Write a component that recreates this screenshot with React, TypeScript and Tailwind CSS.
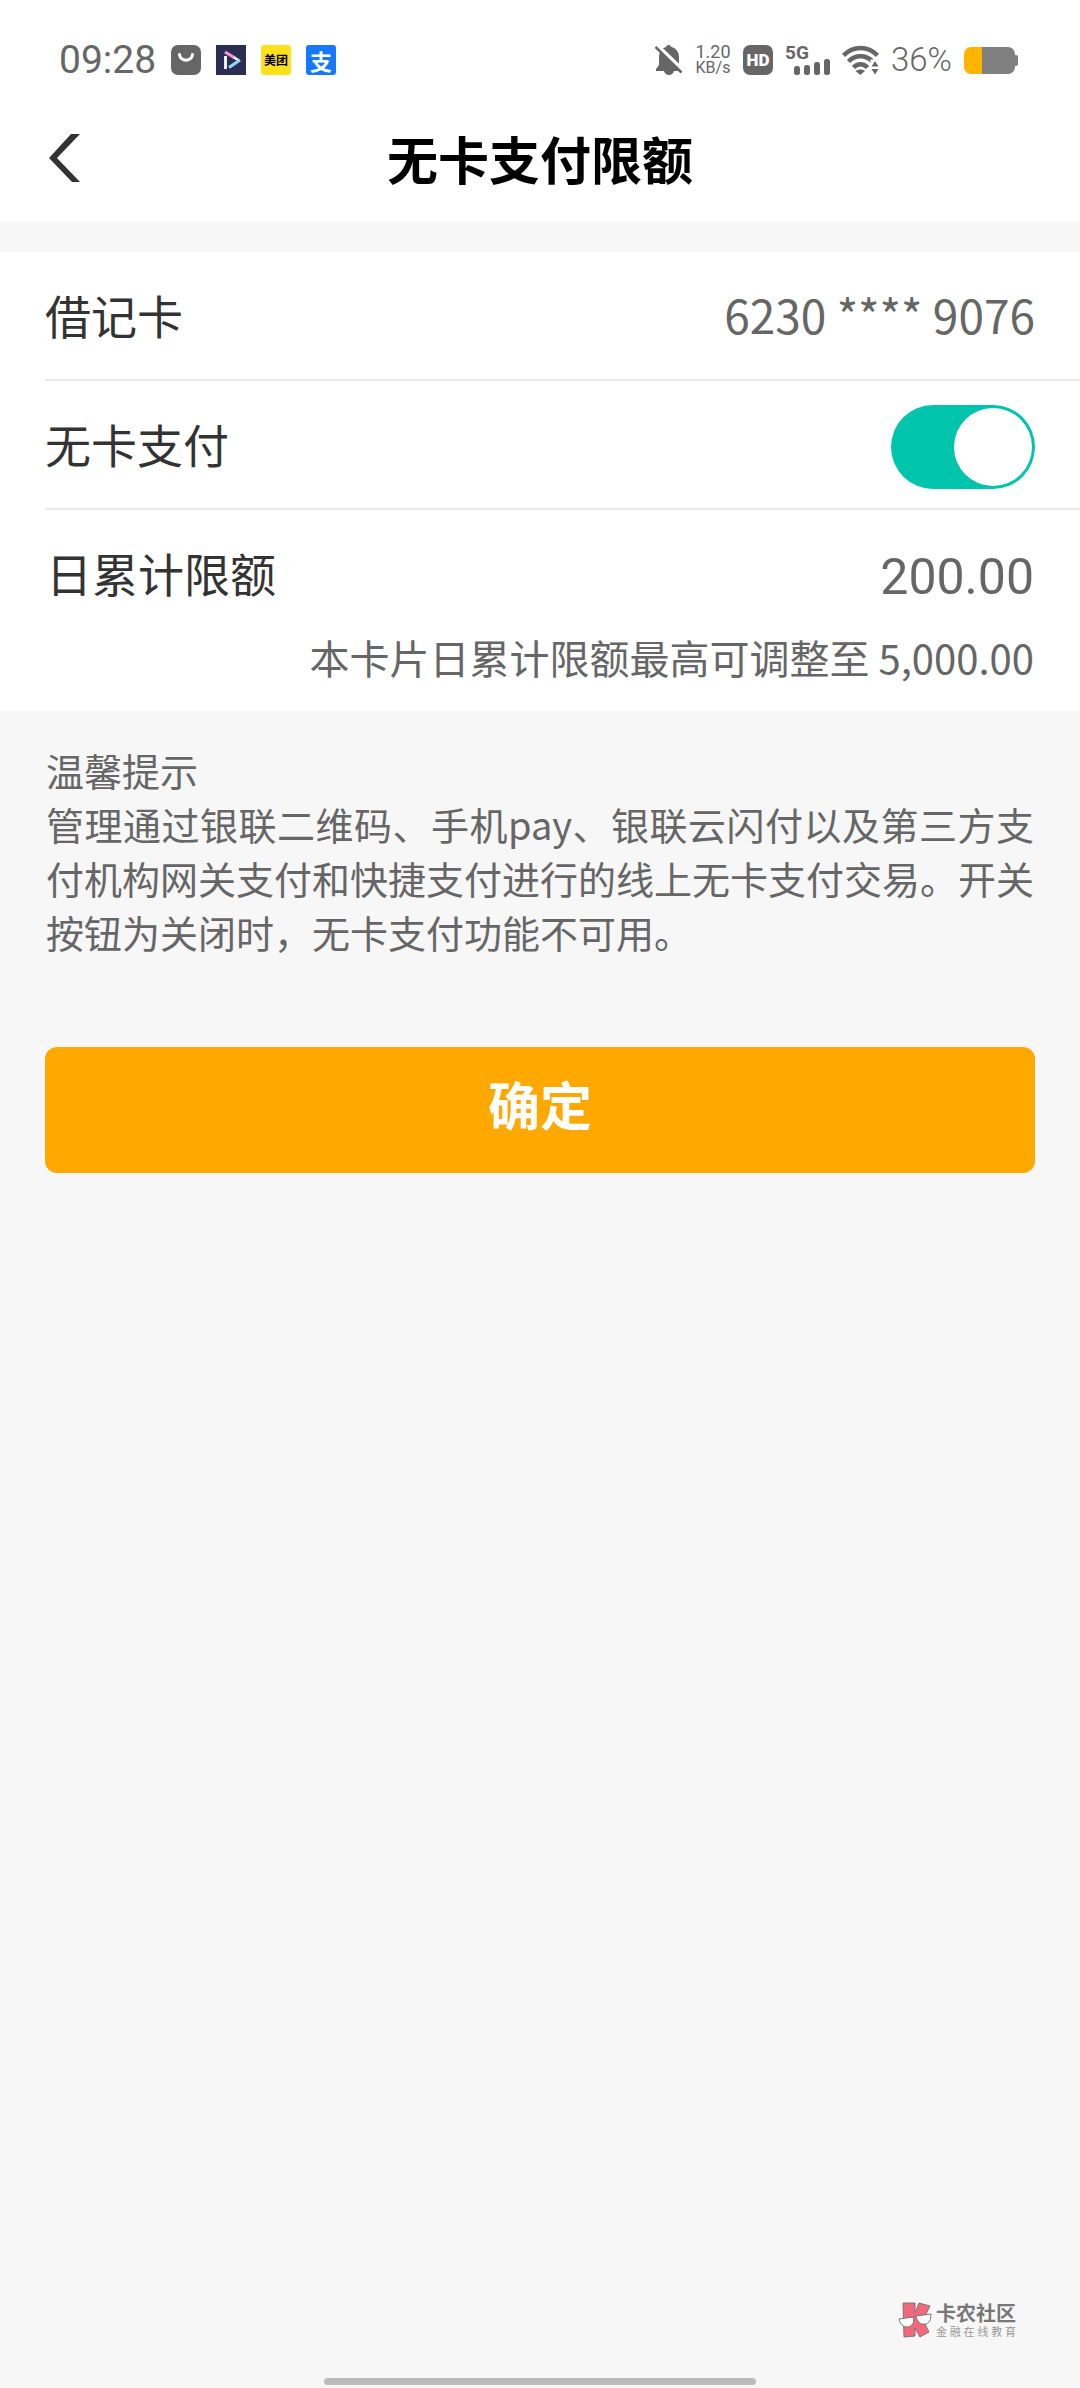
import { useState } from "react";
import type { ReactNode } from "react";

function StatusBar() {
  return (
    <div className="flex h-[102px] items-end justify-between pb-6 pl-[59px] pr-[61px] font-[Roboto,sans-serif] text-[#666]">
      <div className="flex items-center gap-[15px]">
        <span className="text-[39px] leading-9">09:28</span>
        <svg className="size-[30px]" viewBox="0 0 30 30">
          <rect width="30" height="30" rx="7" fill="#666" />
          <path
            d="M8.5 9.5c1 7.5 12 7.5 13 0"
            fill="none"
            stroke="#fff"
            strokeWidth="3"
            strokeLinecap="round"
          />
        </svg>
        <svg className="size-[30px]" viewBox="0 0 30 30">
          <rect width="30" height="30" fill="#2c2d52" />
          <path d="M9.500 11v13" stroke="#fff" strokeWidth="2.8" />
          <path d="M9 7l10 6" stroke="#f59ad0" strokeWidth="3.200" />
          <path d="M18 12.500l5 3" stroke="#fff" strokeWidth="2.6" />
          <path d="M24 15l-11 7.500" stroke="#8fd3f7" strokeWidth="3.200" />
        </svg>
        <span className="flex size-[30px] items-center justify-center rounded-[3px] bg-[#ffe11a] font-['Noto_Sans_CJK_SC',sans-serif] text-[12px] font-bold leading-none text-black">
          美团
        </span>
        <span className="flex size-[30px] items-center justify-center rounded-[3px] bg-[#1677ff] font-['Noto_Sans_CJK_SC',sans-serif] text-[22px] font-bold leading-none text-white">
          支
        </span>
      </div>

      <div className="flex items-center gap-3">
        <svg className="h-[30px] w-7" viewBox="0 0 28 30">
          <path
            d="M13.500 0c1.500 0 2.500.8 2.800 2 4.700 1.200 7.700 5 7.700 10v8l3 4v2H1v-2l3-4v-8c0-5 3-8.800 7-10 .3-1.200 1-2 2.500-2z"
            fill="#666"
          />
          <path d="M9 26h10c-.8 2.700-2.600 4-5 4s-4.200-1.300-5-4z" fill="#666" />
          <path d="M1 0l27 26" stroke="#fff" strokeWidth="5" />
          <path d="M.5 2l26 25.500" stroke="#666" strokeWidth="2.500" />
        </svg>
        <div className="flex w-[36px] flex-col items-center leading-4">
          <span className="text-[18px]">1.20</span>
          <span className="text-[16px]">KB/s</span>
        </div>
        <span className="flex size-[30px] items-center justify-center rounded-[7px] bg-[#666] text-[17px] font-black leading-none text-white">
          HD
        </span>
        <div className="relative h-[30px] w-[45px]">
          <span className="absolute left-0 top-0 text-[19px] font-bold leading-4">
            5G
          </span>
          <svg
            className="absolute bottom-0 right-0 h-4 w-[36px]"
            viewBox="0 0 36 16"
            fill="#666"
          >
            <rect x="0" y="7" width="6" height="9" rx="2.500" />
            <rect x="10" y="6" width="6" height="10" rx="2.500" />
            <rect x="20" y="3" width="6" height="13" rx="2.500" />
            <rect x="30" y="0" width="6" height="16" rx="2.500" />
          </svg>
        </div>
        <svg className="h-[30px] w-[37px]" viewBox="0 0 37 30">
          <g fill="none" stroke="#666" strokeWidth="4.500">
            <path d="M1.500 10.500c9.500-10 24.500-10 34 0" />
            <path d="M6.500 16.500c6.500-7 17.500-7 24 0" />
            <path d="M11.500 22.500c4-4.500 10-4.500 14 0" />
          </g>
          <path d="M13.500 26c3-2 7-2 9.500 0l-4.700 4z" fill="#666" />
          <path d="M28.500 14.500h9v16h-9z" fill="#fff" />
          <path d="M29.500 21.500l3.500-5.500 3.500 5.500zM29.500 24l3.500 5.500 3.500-5.500z" fill="#666" />
        </svg>
        <span className="text-[33px] font-light leading-9">36%</span>
        <svg className="h-[27px] w-[55px]" viewBox="0 0 55 27">
          <path d="M18 0h26a7 7 0 0 1 7 7v13a7 7 0 0 1-7 7H18z" fill="#808080" />
          <path d="M18 0H7a7 7 0 0 0-7 7v13a7 7 0 0 0 7 7h11z" fill="#ffb400" />
          <rect x="50" y="8" width="4" height="11" rx="2" fill="#808080" />
        </svg>
      </div>
    </div>
  );
}

function Row({ children }: { children: ReactNode }) {
  return (
    <div className="ml-[45px] flex h-[129px] items-start justify-between border-b-2 border-[#e9e9e9] pr-[45px] pt-6 leading-[76px]">
      {children}
    </div>
  );
}

function Watermark() {
  return (
    <div className="mr-16 flex items-center gap-1 self-end">
      <svg className="h-9 w-[34px]" viewBox="0 0 34 36">
        <g stroke="#777" strokeWidth="1">
          <path d="M5 1h12v10l4-10 11 3-7 14 6 12-9 5-5-9v8l-11 1z" fill="#f4687b" />
          <path d="M1 17l14-2c2 6-1 9-5 10-5 0-8-3-9-8z" fill="#fff" />
          <path d="M18 14l15-2c0 6-2 10-6 10-5 1-8-3-9-8z" fill="#fff" />
          <path d="M15 15l3-1" />
        </g>
      </svg>
      <div className="w-20 text-[#777]">
        <p className="text-[20px] font-bold leading-[22px]">卡农社区</p>
        <p className="text-[11px] leading-[14px] text-[#999] [text-align-last:justify]">
          金融在线教育
        </p>
      </div>
    </div>
  );
}

export default function App() {
  const [enabled, setEnabled] = useState(true);
  const [limit, setLimit] = useState("200.00");

  return (
    <div
      lang="zh-CN"
      className="flex min-h-screen flex-col bg-[#f7f7f7] font-['Noto_Sans_CJK_SC',sans-serif] text-[46px] text-[#666]"
    >
      <header className="bg-white">
        <StatusBar />
        <div className="grid h-[120px] grid-cols-[1fr_auto_1fr] items-start">
          <button type="button" aria-label="返回" className="ml-12 mt-8 w-8">
            <svg className="h-12 w-8" viewBox="0 0 32 48">
              <path d="M23 0h9L9 24l23 24h-8L1 24z" fill="#333" />
            </svg>
          </button>
          <h1 className="text-[51px] font-bold leading-[112px] text-black">
            无卡支付限额
          </h1>
        </div>
      </header>

      <main className="mt-[30px]">
        <section className="bg-white">
          <Row>
            <span className="text-[#333]">借记卡</span>
            <span>6230 **** 9076</span>
          </Row>
          <Row>
            <label htmlFor="cardless" className="text-[#333]">
              无卡支付
            </label>
            <input
              id="cardless"
              type="checkbox"
              role="switch"
              checked={enabled}
              onChange={(e) => setEnabled(e.target.checked)}
              className="flex h-[84px] w-36 appearance-none items-center rounded-full bg-gray-300 px-[3px] before:size-[78px] before:rounded-full before:bg-white checked:justify-end checked:bg-[#00c4ac]"
            />
          </Row>
          <div className="px-[46px] pb-6 pt-6">
            <div className="flex items-start justify-between leading-[76px]">
              <label htmlFor="limit" className="text-[#333]">
                日累计限额
              </label>
              <input
                id="limit"
                type="text"
                inputMode="decimal"
                value={limit}
                onChange={(e) => setLimit(e.target.value)}
                className="h-[85px] w-80 bg-transparent text-right font-[Roboto,sans-serif] text-[50px]"
              />
            </div>
            <p className="mt-2 text-right text-[40px] leading-[60px]">
              本卡片日累计限额最高可调整至 5,000.00
            </p>
          </div>
        </section>

        <section className="px-[46px] pt-8 text-[38px] leading-[54px]">
          <h2>温馨提示</h2>
          <p className="text-justify">
            管理通过银联二维码、手机pay、银联云闪付以及第三方支付机构网关支付和快捷支付进行的线上无卡支付交易。开关按钮为关闭时，无卡支付功能不可用。
          </p>
        </section>

        <div className="px-[45px] pt-[88px]">
          <button
            type="button"
            className="h-[126px] w-full rounded-xl bg-[#ffa800] pb-3 text-[52px] font-bold text-white"
          >
            确定
          </button>
        </div>
      </main>

      <footer className="mt-auto flex flex-col items-center gap-10 pb-[3px]">
        <Watermark />
        <div className="h-[7px] w-2/5 rounded-full bg-[#bababa]" />
      </footer>
    </div>
  );
}
